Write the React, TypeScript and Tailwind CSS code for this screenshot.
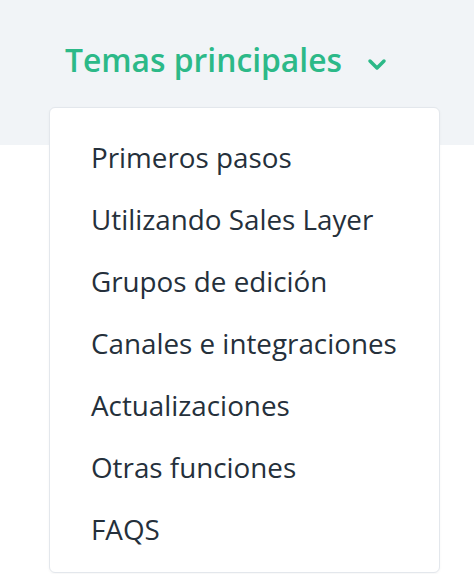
const items = [
  "Primeros pasos",
  "Utilizando Sales Layer",
  "Grupos de edición",
  "Canales e integraciones",
  "Actualizaciones",
  "Otras funciones",
  "FAQS",
];

const App = () => {
  return (
    <div className="relative w-[474px] h-[574px] overflow-hidden bg-white font-['Open_Sans',sans-serif]">
      <div className="h-[145px] bg-[#f1f4f7]">
        <button className="flex items-center pl-[65px] pt-[40px] text-[#2cb988]">
          <span className="text-[31.8px] leading-[40px] font-semibold">Temas principales</span>
          <svg width="20" height="14" viewBox="0 0 20 14" className="ml-[25px] mt-[8px]">
            <path d="M3 4l7 7 7-7" fill="none" stroke="currentColor" strokeWidth="3.5" strokeLinecap="round" strokeLinejoin="round" />
          </svg>
        </button>
      </div>
      <div className="absolute left-[49px] top-[107px] w-[391px] h-[466px] bg-white border border-[#e3e7ec] rounded-[6px] shadow-[0_1px_3px_rgba(0,0,0,0.04)]">
        <ul className="pt-[30px] pl-[41px]">
          {items.map((item) => (
            <li key={item} className="h-[62px] text-[27.8px] leading-[38px] text-[#25303b]">
              {item}
            </li>
          ))}
        </ul>
      </div>
    </div>
  );
};

export default App;
